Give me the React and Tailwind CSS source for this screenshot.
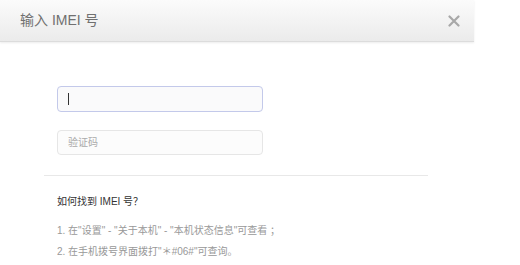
export default function App() {
  const font = { fontFamily: '"Liberation Sans", "Noto Sans CJK SC", sans-serif' };
  return (
    <div className="w-[520px] h-[265px] bg-white overflow-hidden" style={font}>
      <div className="w-[474px]">
        <div className="h-[42px] flex items-center justify-between pl-[20px] pr-[14px] bg-gradient-to-b from-[#fbfbfb] to-[#ebebeb] border-b border-[#dcdcdc] shadow-[0_1px_2px_rgba(0,0,0,0.08)]">
          <span className="text-[14px] text-[#707070]">输入 IMEI 号</span>
          <svg width="12" height="12" viewBox="0 0 12 12">
            <path d="M1.5 1.5 L10.5 10.5 M10.5 1.5 L1.5 10.5" stroke="#a8a8a8" strokeWidth="2.2" strokeLinecap="round" />
          </svg>
        </div>
        <div className="pt-[44px]">
          <div className="pl-[57px] flex flex-col gap-[18px]">
            <div className="w-[206px] h-[26px] rounded-[4px] border border-[#c3c9ea] bg-[#fafafb] flex items-center pl-[10px]">
              <span className="w-px h-[12px] bg-[#333]"></span>
            </div>
            <div className="w-[206px] h-[25px] rounded-[4px] border border-[#e6e6e6] bg-[#fcfcfc] flex items-center pl-[10px]">
              <span className="text-[10px] text-[#aaa]">验证码</span>
            </div>
          </div>
          <div className="mt-[20px] ml-[44px] w-[384px] h-px bg-[#e8e8e8]"></div>
          <div className="pl-[57px] pt-[19px]">
            <div className="text-[10px] leading-[14px] text-[#333]">如何找到 IMEI 号？</div>
            <div className="mt-[11px] text-[10px] leading-[21px] text-[#999]">
              <div>1. 在"设置" - "关于本机" - "本机状态信息"可查看 ；</div>
              <div>2. 在手机拨号界面拨打"＊#06#"可查询。</div>
            </div>
          </div>
        </div>
      </div>
    </div>
  );
}
